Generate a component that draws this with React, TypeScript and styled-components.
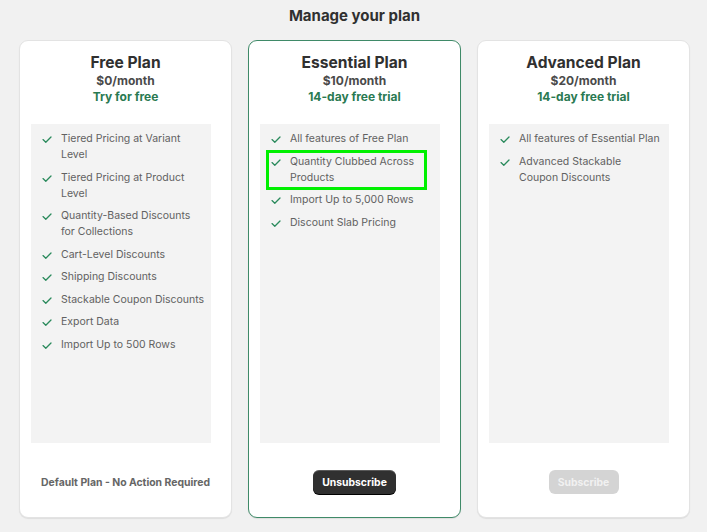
import React from 'react'
import styled, { createGlobalStyle, css } from 'styled-components'

const GlobalStyle = createGlobalStyle`
  html, body {
    margin: 0;
    padding: 0;
    background: #f1f1f1;
    font-family: Inter, "Noto Sans", sans-serif;
  }
`

type Plan = {
  name: string
  price: string
  trial: string
  features: string[]
  highlight?: number
  current?: boolean
  action: 'none' | 'unsubscribe' | 'subscribe'
}

const plans: Plan[] = [
  {
    name: 'Free Plan',
    price: '$0/month',
    trial: 'Try for free',
    features: [
      'Tiered Pricing at Variant Level',
      'Tiered Pricing at Product Level',
      'Quantity-Based Discounts for Collections',
      'Cart-Level Discounts',
      'Shipping Discounts',
      'Stackable Coupon Discounts',
      'Export Data',
      'Import Up to 500 Rows'
    ],
    action: 'none'
  },
  {
    name: 'Essential Plan',
    price: '$10/month',
    trial: '14-day free trial',
    features: [
      'All features of Free Plan',
      'Quantity Clubbed Across Products',
      'Import Up to 5,000 Rows',
      'Discount Slab Pricing'
    ],
    highlight: 1,
    current: true,
    action: 'unsubscribe'
  },
  {
    name: 'Advanced Plan',
    price: '$20/month',
    trial: '14-day free trial',
    // keep "Coupon Discounts" together so it wraps as one unit
    features: ['All features of Essential Plan', 'Advanced Stackable Coupon\u00a0Discounts'],
    action: 'subscribe'
  }
]

const Page = styled.div`
  height: 532px;
  box-sizing: border-box;
  padding: 6px 17px 14px 19px;
  display: flex;
  flex-direction: column;
`

const Heading = styled.h1`
  margin: 0 0 14px;
  text-align: center;
  font-size: 15px;
  line-height: 20px;
  font-weight: 700;
  color: #303030;
`

const Cards = styled.div`
  flex: 1;
  display: grid;
  grid-template-columns: repeat(3, 1fr);
  gap: 16px;
`

const Card = styled.div<{ $current?: boolean }>`
  background: #ffffff;
  border-radius: 9px;
  border: 1px solid ${({ $current }) => ($current ? '#3f8a68' : '#e3e3e3')};
  box-shadow: 0 1px 1px rgba(0, 0, 0, 0.08);
  padding: 12px 11px 23px;
  display: flex;
  flex-direction: column;
  align-items: stretch;
`

const PlanName = styled.div`
  text-align: center;
  font-size: 15.6px;
  line-height: 20px;
  font-weight: 700;
  color: #303030;
`

const Price = styled.div`
  text-align: center;
  font-size: 12px;
  line-height: 16px;
  font-weight: 700;
  color: #4a4a4a;
`

const Trial = styled.div`
  text-align: center;
  font-size: 12px;
  line-height: 16px;
  font-weight: 700;
  color: #2a7a52;
`

const FeatureBox = styled.ul`
  flex: 1;
  margin: 19px 9px 0 0;
  padding: 7px 5.5px 6px 10px;
  list-style: none;
  background: #f3f3f3;
  display: flex;
  flex-direction: column;
  gap: 6.5px;
`

const Feature = styled.li<{ $highlight?: boolean }>`
  display: flex;
  align-items: flex-start;
  gap: 9px;
  font-size: 10.5px;
  line-height: 16px;
  color: #616161;
  padding-left: 1px;
  ${({ $highlight }) =>
    $highlight &&
    css`
      outline: 3px solid #00f000;
      outline-offset: 1px;
      margin-right: 11.5px;
    `}
`

const Check = styled.svg`
  flex: none;
  width: 10px;
  height: 16px;
`

const Footer = styled.div`
  height: 24px;
  margin-top: 27px;
  display: flex;
  justify-content: center;
  align-items: center;
`

const Note = styled.span`
  font-size: 10.4px;
  font-weight: 700;
  color: #666666;
`

const ActionButton = styled.button<{ $disabled?: boolean }>`
  height: 24px;
  padding: 0;
  border: none;
  border-radius: 6px;
  font-family: inherit;
  font-size: 10.4px;
  font-weight: 700;
  ${({ $disabled }) =>
    $disabled
      ? css`
          background: #d4d4d4;
          color: #f1f1f1;
          width: 70px;
        `
      : css`
          background: #303030;
          color: #ffffff;
          width: 83px;
          box-shadow: 0 1px 0 #000, inset 0 1px 0 rgba(255, 255, 255, 0.2);
        `}
`

function CheckIcon() {
  return (
    <Check viewBox="0 0 10 16" fill="none">
      <path d="M1 8.6l2.8 2.6L9 6" stroke="#2a8a5c" strokeWidth="1.3" strokeLinecap="round" strokeLinejoin="round" />
    </Check>
  )
}

export default function App() {
  return (
    <>
      <GlobalStyle />
      <Page>
        <Heading>Manage your plan</Heading>
        <Cards>
          {plans.map((plan) => (
            <Card key={plan.name} $current={plan.current}>
              <PlanName>{plan.name}</PlanName>
              <Price>{plan.price}</Price>
              <Trial>{plan.trial}</Trial>
              <FeatureBox>
                {plan.features.map((f, i) => (
                  <Feature key={f} $highlight={plan.highlight === i}>
                    <CheckIcon />
                    <span>{f}</span>
                  </Feature>
                ))}
              </FeatureBox>
              <Footer>
                {plan.action === 'none' && <Note>Default Plan - No Action Required</Note>}
                {plan.action === 'unsubscribe' && <ActionButton>Unsubscribe</ActionButton>}
                {plan.action === 'subscribe' && <ActionButton $disabled disabled>Subscribe</ActionButton>}
              </Footer>
            </Card>
          ))}
        </Cards>
      </Page>
    </>
  )
}
